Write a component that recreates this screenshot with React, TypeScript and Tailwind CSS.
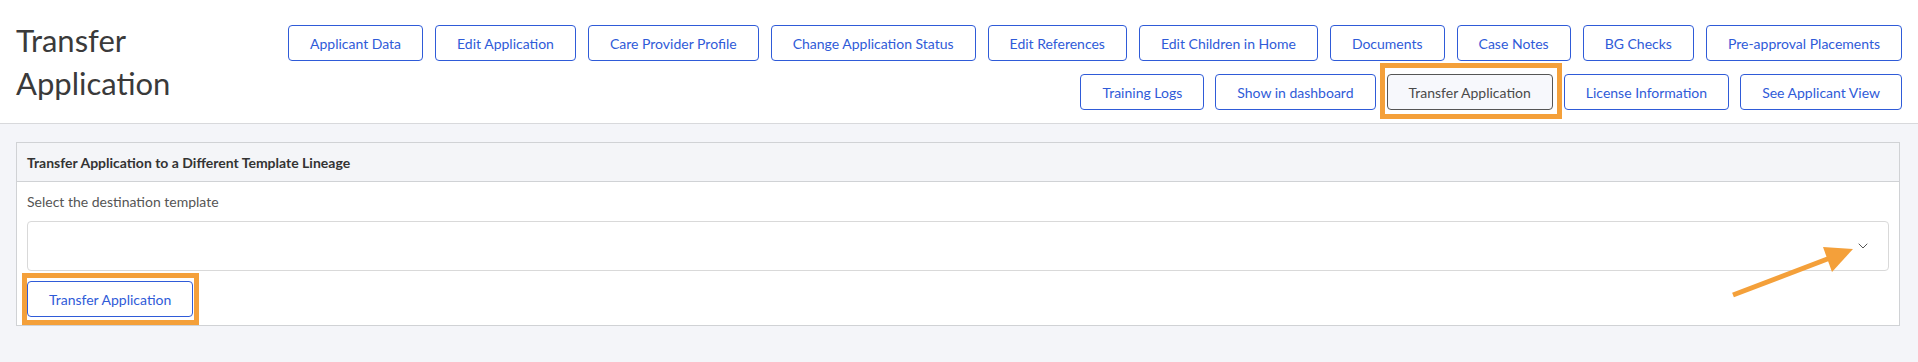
import { ChevronDown } from "lucide-react";

const rowOne = [
  "Applicant Data",
  "Edit Application",
  "Care Provider Profile",
  "Change Application Status",
  "Edit References",
  "Edit Children in Home",
  "Documents",
  "Case Notes",
  "BG Checks",
  "Pre-approval Placements",
];

const rowTwo = ["Training Logs", "Show in dashboard", "Transfer Application", "License Information", "See Applicant View"];

function NavButton({ label, active }: { label: string; active?: boolean }) {
  if (active) {
    return (
      <div className="relative">
        <button className="h-9 rounded-[4px] border border-[#555] bg-[#f7f8fc] px-[21px] text-[14px] text-[#4a4a4a]">
          {label}
        </button>
        {/* orange highlight drawn on the screenshot */}
        <span className="pointer-events-none absolute -bottom-[9px] -left-[7px] -right-[9px] -top-[11px] border-[5px] border-[#f4a03a]" />
      </div>
    );
  }
  return (
    <button className="h-9 rounded-[4px] border border-[#2f5bd8] bg-white px-[21px] text-[14px] text-[#2f5bd8]">
      {label}
    </button>
  );
}

export default function App() {
  return (
    <div className="relative min-h-[362px] bg-[#f4f5f9] font-['Lato','Liberation_Sans',sans-serif]">
      <header className="flex h-[124px] border-b border-[#d8d9dc] bg-white pl-4 pr-4 pt-[19px]">
        <h1 className="w-[220px] shrink-0 text-[31px] leading-[43px] text-[#3a3a3a]">Transfer Application</h1>
        <div className="mt-[6px] flex flex-1 flex-col items-end gap-[13px]">
          <div className="flex gap-3">
            {rowOne.map((b) => (
              <NavButton key={b} label={b} />
            ))}
          </div>
          <div className="flex gap-[11px]">
            {rowTwo.map((b) => (
              <NavButton key={b} label={b} active={b === "Transfer Application"} />
            ))}
          </div>
        </div>
      </header>

      <section className="ml-4 mr-[18px] mt-[18px] border border-[#d0d2d5] bg-white">
        <div className="flex h-[39px] items-center border-b border-[#d0d2d5] bg-[#f4f5f8] px-[10px] text-[14px] font-bold text-[#333]">
          Transfer Application to a Different Template Lineage
        </div>
        <div className="px-[10px] pb-[8px] pt-[10px]">
          <label className="block text-[14px] leading-[20px] text-[#555]">Select the destination template</label>
          <div className="mt-[9px] flex h-[50px] items-center justify-end rounded-[4px] border border-[#d9d9d9] bg-white pr-[17px]">
            <ChevronDown className="h-4 w-4 text-[#555]" strokeWidth={1.5} />
          </div>
          <div className="relative mt-[10px] inline-block">
            <button className="h-9 rounded-[4px] border border-[#2f5bd8] bg-white px-[21px] text-[14px] text-[#2f5bd8]">
              Transfer Application
            </button>
            <span className="pointer-events-none absolute -bottom-[8px] -left-[5px] -right-[6px] -top-[8px] border-[5px] border-[#f4a03a]" />
          </div>
        </div>
      </section>

      {/* annotation arrow pointing at the select chevron */}
      <svg className="pointer-events-none absolute left-0 top-0" width="1918" height="362">
        <line x1="1733" y1="295" x2="1830" y2="258" stroke="#f4a03a" strokeWidth="5" />
        <polygon points="1823,247 1853,249 1832,272" fill="#f4a03a" />
      </svg>
    </div>
  );
}
